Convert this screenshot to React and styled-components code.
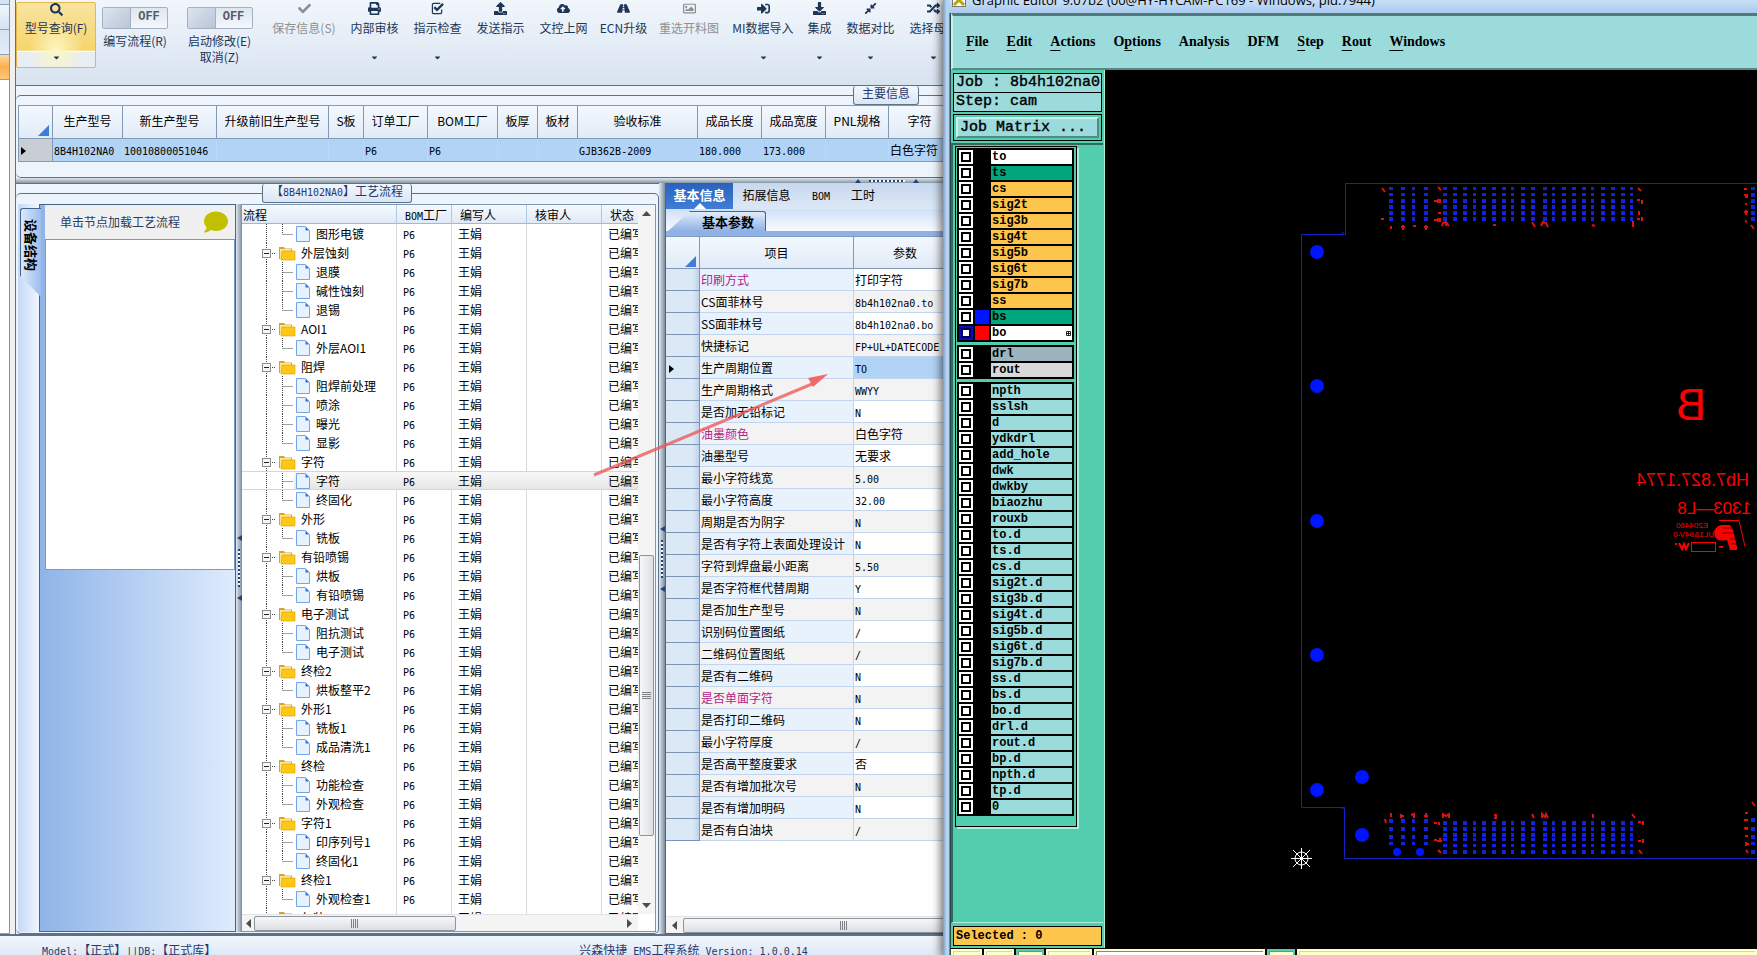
import React from "react";
import styled, { createGlobalStyle, css } from "styled-components";
import {
	FaSearch,
	FaCheck,
	FaPrint,
	FaUpload,
	FaCloudUploadAlt,
	FaRoad,
	FaRegImage,
	FaSignInAlt,
	FaDownload,
	FaCompressAlt,
	FaRandom,
	FaComment,
	FaCaretDown,
} from "react-icons/fa";

const GlobalStyle = createGlobalStyle`
	* {
		box-sizing: border-box;
	}
	body {
		margin: 0;
		overflow: hidden;
		font-family: "Noto Sans CJK SC", "Liberation Sans", sans-serif;
		font-size: 12px;
		line-height: 16px;
		color: #000;
	}
	button, input {
		font: inherit;
		color: inherit;
		margin: 0;
		padding: 0;
		border: 0;
		background: none;
	}
	table {
		border-collapse: separate;
		border-spacing: 0;
		table-layout: fixed;
	}
	th, td {
		padding: 0;
		font-weight: normal;
		text-align: left;
		white-space: nowrap;
		overflow: hidden;
	}
`;

const Desktop = styled.div`
	position: relative;
	height: 100vh;
	overflow: hidden;
`;
const Mono = styled.span`
	font-family: "DejaVu Sans Mono", monospace;
	font-size: 10px;
	line-height: 10px;
`;

/* ---------- EMS window ---------- */

const EmsWindow = styled.div`
	display: flex;
	flex-direction: column;
	height: 100%;
	background: #e8f0fa;
`;
const EmsBody = styled.div`
	display: flex;
	flex: 1;
	min-height: 0;
`;
const Main = styled.main`
	display: flex;
	flex-direction: column;
	flex: 1;
	min-width: 0;
	border-left: 1px solid #5b7288;
`;
const NavEdge = styled.div`
	display: flex;
	flex-direction: column;
	width: 15px;
	padding-right: 5px;
	background: #f0f0f0;
`;
const NavCell = styled.div`
	height: ${({ $h }) => $h}px;
	flex: ${({ $h }) => ($h ? "none" : 1)};
	border-right: 1px solid #7f96b5;
	border-bottom: 1px solid #8ba0bf;
	background: ${({ $bg }) => $bg};
`;

const Toolbar = styled.div`
	display: flex;
	height: 85px;
	background: linear-gradient(#f1f6fc, #d8e3f0);
	color: #1e3555;
	overflow: hidden;
`;
const ToolButton = styled.button`
	display: flex;
	flex-direction: column;
	align-items: center;
	flex: none;
	width: ${({ $w }) => $w}px;
	height: 66px;
	white-space: nowrap;
	color: ${({ disabled }) => (disabled ? "#8f8f8f" : "#1e3555")};
	svg {
		flex: none;
		height: 13px;
		width: 13px;
		margin: 2px 0 5px;
	}
	${({ $active }) =>
		$active &&
		css`
			margin-top: 2px;
			border: 1px solid #e2b94c;
			border-radius: 2px;
			background: radial-gradient(ellipse at 50% 75%, #fdf6c4, transparent 50%),
				linear-gradient(#f9e3a0, #f5d56c 74%, #fff 75%, #fff 76%, #e7edf3 77%);
			svg {
				margin: 0 0 4px;
			}
		`}
`;
const MenuCaret = styled.span`
	display: flex;
	justify-content: center;
	margin-top: 17px;
	svg {
		width: 9px;
		height: 9px;
		margin: 0;
	}
`;
const ToggleGroup = styled.div`
	display: flex;
	flex-direction: column;
	align-items: center;
	flex: none;
	width: ${({ $w }) => $w}px;
	padding-top: 7px;
	white-space: nowrap;
	label {
		display: flex;
		flex-direction: column;
		align-items: center;
		gap: 4px;
	}
`;
const Toggle = styled.span`
	display: flex;
	width: 66px;
	height: 22px;
	border: 1px solid #a3b1c4;
	border-radius: 2px;
	background: linear-gradient(#dfe6ef, #f4f7fb);
	input {
		appearance: none;
		width: 28px;
		height: 20px;
		border-right: 1px solid #a3b1c4;
		background: linear-gradient(135deg, #dde5ee, #b9c6d6);
	}
	b {
		flex: 1;
		font: bold 12px/18px "Liberation Mono", monospace;
		text-align: center;
		color: #555c66;
	}
`;

const GroupArea = styled.section`
	display: flex;
	flex-direction: column;
	height: ${({ $h }) => ($h ? $h + "px" : "auto")};
	width: ${({ $w }) => ($w ? $w + "px" : "auto")};
	flex: none;
	background: #edf4fc;
	border-top: 1px solid #5b7288;
`;
const GroupBox = styled.fieldset`
	display: flex;
	flex-direction: column;
	flex: 1;
	min-width: 0;
	min-height: 0;
	margin: 0;
	padding: 0 2px 1px;
	border: 1px solid #5b7288;
	border-left: 0;
	border-radius: 5px;
`;
const GroupTitle = styled.legend`
	height: 19px;
	margin: 0 auto;
	padding: 0 8px;
	line-height: 14px;
	color: #27386e;
	border: 1px solid #5b7288;
	border-top: 0;
	border-radius: 3px;
	background: linear-gradient(#f2f7fd, #dbe6f4);
`;

const InfoPane = styled.div`
	flex: 1;
	border: 1px solid #7f9bbd;
	background: #fff;
	overflow: hidden;
`;
const InfoTable = styled.table`
	width: 932px;
	th {
		height: 33px;
		padding-bottom: 2px;
		text-align: center;
		border-right: 1px solid #8198b6;
		border-bottom: 1px solid #8198b6;
		background: linear-gradient(#f3f8fd, #e1ebf7);
	}
	td {
		height: 22px;
		padding-left: 1px;
		background: #b1d3f6;
		border-right: 1px solid #bcd8f5;
	}
	td:first-child {
		padding-left: 2px;
		background: #c9ced4;
		border-right-color: #8198b6;
	}
`;
const Corner = styled.svg`
	display: block;
	width: 11px;
	height: 11px;
	margin: 18px 3px 0 auto;
	fill: #3f7ddb;
`;

const HSplitter = styled.div`
	display: flex;
	align-items: center;
	justify-content: center;
	gap: 8px;
	flex: none;
	height: 5px;
	background: linear-gradient(#dfe8f0, #8796a4);
`;
const VSplitter = styled.div`
	display: flex;
	flex-direction: column;
	align-items: center;
	justify-content: center;
	gap: 8px;
	flex: none;
	width: 6px;
	background: linear-gradient(90deg, #dfe8f2, #7e8c99);
`;
const Dots = styled.div`
	width: ${({ $v }) => ($v ? 2 : 36)}px;
	height: ${({ $v }) => ($v ? 38 : 2)}px;
	background: repeating-linear-gradient(
		${({ $v }) => ($v ? "180deg" : "90deg")},
		#24427a 0 2px,
		#f4f8fc 2px 4px
	);
`;
const Tip = styled.div`
	width: 0;
	height: 0;
	border: 3px solid transparent;
	${({ $v }) =>
		$v ? "border-left: 0; border-right: 5px solid #24427a;" : "border-top: 0; border-bottom: 4px solid #24427a;"}
`;

const Lower = styled.div`
	display: flex;
	flex: 1;
	min-height: 0;
`;
const FlowRow = styled.div`
	display: flex;
	flex: 1;
	min-height: 0;
	padding-top: 1px;
`;
const SideTabs = styled.div`
	flex: none;
	width: 21px;
	padding-top: 4px;
	background: linear-gradient(90deg, #c3d9fa, #f1f6fe);
`;
const SideTab = styled.button`
	display: block;
	width: 21px;
	height: 89px;
	margin-left: 2px;
	padding: 10px 0 0;
	text-align: left;
	writing-mode: vertical-rl;
	text-orientation: sideways;
	font-size: 13px;
	line-height: 19px;
	font-weight: bold;
	background: linear-gradient(90deg, #dce9fb, #9dbdec);
	border: 1px solid #46648c;
	border-width: 1px 0 0 1px;
	border-radius: 3px 0 0 0;
	clip-path: polygon(0 0, 100% 0, 100% 100%, 0 76%);
`;
const NodePanel = styled.div`
	flex: none;
	width: 197px;
	padding-left: 5px;
	border: 1px solid #46648c;
	background: linear-gradient(90deg, #8fb4e8, #deebfd);
`;
const NodeHead = styled.div`
	display: flex;
	align-items: center;
	justify-content: space-between;
	height: 34px;
	padding: 0 7px 1px 15px;
	color: #2c3c5e;
	background: #f0f0f0;
	svg {
		width: 24px;
		height: 24px;
		color: #c0c000;
	}
`;
const NodeBox = styled.div`
	height: 331px;
	border: 1px solid #7b9ac5;
	background: #fff;
`;

const TreePane = styled.div`
	display: flex;
	flex-direction: column;
	flex: 1;
	min-width: 0;
	border: 1px solid #7b96b9;
	border-left: 0;
	background: #fff;
`;
const TreeView = styled.div`
	display: flex;
	flex: 1;
	min-height: 0;
`;
const TreeClip = styled.div`
	flex: 1;
	min-width: 0;
	overflow: hidden;
`;
const TreeTable = styled.table`
	width: 410px;
	th {
		height: 19px;
		padding-left: 8px;
		line-height: 17px;
		border-right: 1px solid #b5c7de;
		border-bottom: 1px solid #9fb8d8;
		background: linear-gradient(#f5f9fe, #dfe9f6);
	}
	th:first-child {
		padding-left: 1px;
	}
	td {
		height: 19px;
		padding-left: 6px;
		line-height: 17px;
		border-right: 1px solid #d9d9d9;
	}
	td:first-child {
		padding-left: 19px;
	}
`;
const TreeRow = styled.tr`
	${({ $selected }) =>
		$selected &&
		css`
			td {
				border-top: 1px solid #d5d5d5;
				border-bottom: 1px solid #d5d5d5;
				border-right: 0;
				background: linear-gradient(#f8f8f8, #e6e6e6);
			}
			td:first-child {
				background: linear-gradient(90deg, #fff 52px, transparent 52px), linear-gradient(#f8f8f8, #e6e6e6);
			}
		`}
`;
const NodeCell = styled.div`
	display: flex;
	align-items: center;
	height: 19px;
	margin: -1px 0;
	svg {
		flex: none;
		margin-right: 5px;
	}
`;

const VScroll = styled.div`
	display: flex;
	flex-direction: column;
	align-items: center;
	width: 17px;
	background: #f4f4f4;
`;
const HScroll = styled.div`
	display: flex;
	align-items: center;
	flex: none;
	height: 17px;
	margin-right: ${({ $gap }) => $gap || 0}px;
	background: #f4f4f4;
	border-top: 1px solid #e3e3e3;
`;
const Arrow = styled.button`
	display: grid;
	place-items: center;
	flex: none;
	width: ${({ $side }) => ($side ? 12 : 17)}px;
	height: 17px;
	svg {
		width: 9px;
		height: 9px;
		fill: #4c4c4c;
	}
`;
const Track = styled.div`
	flex: ${({ $n }) => $n};
`;
const Thumb = styled.div`
	display: grid;
	place-items: center;
	flex: ${({ $n }) => $n};
	width: 15px;
	height: 15px;
	border: 1px solid #8e949b;
	border-radius: 2px;
	background: linear-gradient(${({ $v }) => ($v ? "90deg" : "180deg")}, #f6f7f8, #dcdfe3);
	&::before {
		content: "";
		width: ${({ $v }) => ($v ? 9 : 7)}px;
		height: ${({ $v }) => ($v ? 7 : 9)}px;
		background: repeating-linear-gradient(
			${({ $v }) => ($v ? "180deg" : "90deg")},
			#7c8288 0 1px,
			transparent 1px 2px
		);
	}
`;

const ParamPane = styled.section`
	display: flex;
	flex-direction: column;
	flex: 1;
	min-width: 0;
	border: 1px solid #3f67a5;
	border-width: 0 0 1px 1px;
	background: #8fb1e6;
`;
const MainTabs = styled.div`
	display: flex;
	flex: none;
	height: 26px;
	background: linear-gradient(#c7d8ee, #dde8f6);
`;
const MainTab = styled.button`
	width: ${({ $w }) => $w}px;
	padding-bottom: 2px;
	${({ $active }) =>
		$active &&
		css`
			font-size: 13px;
			font-weight: bold;
			color: #fff;
			background: linear-gradient(#2a62bd, #3f7ed8);
			&::after {
				content: "";
				display: block;
				width: 0;
				margin: 0 auto -5px;
				border: 6px solid transparent;
				border-top: 0;
				border-bottom-color: #fff;
			}
		`}
`;
const SubTabs = styled.div`
	flex: none;
	height: 27px;
	padding: 2px 0 0 2px;
	border-bottom: 5px solid #8fb1e6;
	background: linear-gradient(#d0e0f8, #f8fbff);
`;
const SubTab = styled.button`
	width: 98px;
	height: 20px;
	padding-left: 23px;
	font-size: 13px;
	font-weight: bold;
	background: linear-gradient(#e2edfb, #8fb1e6);
	border: 1px solid #46648c;
	border-width: 1px 1px 0 0;
	border-radius: 0 3px 0 0;
	clip-path: polygon(22px 0, 100% 0, 100% 100%, 0 100%);
`;
const ParamView = styled.div`
	flex: 1;
	min-height: 0;
	border-top: 1px solid #7f9bbd;
	background: #fff;
	overflow: hidden;
`;
const ParamTable = styled.table`
	width: 291px;
	thead th {
		height: 32px;
		text-align: center;
		border-right: 1px solid #8198b6;
		border-bottom: 1px solid #8198b6;
		background: linear-gradient(#f3f8fd, #e1ebf7);
	}
	tbody th {
		height: 22px;
		border-right: 1px solid #7d93b3;
		border-bottom: 1px solid #7d93b3;
		background: linear-gradient(90deg, #dbe8f5 80%, #c0d2ea);
	}
	td {
		height: 22px;
		padding-left: 1px;
		line-height: 18px;
		border-right: 1px solid #c3d4ee;
		border-bottom: 1px solid #c3d4ee;
	}
`;
const ParamRow = styled.tr`
	td {
		background: ${({ $odd }) => ($odd ? "#f3f3f3" : "#fff")};
	}
	td:nth-child(2) {
		color: ${({ $key }) => ($key ? "#b3218c" : "#000")};
		background: ${({ $odd }) => ($odd ? "#f3f3f3" : "#e8f2fd")};
	}
	td:nth-child(3) {
		${({ $current }) => $current && "background: #b1d3f6;"}
	}
`;

const StatusBar = styled.footer`
	display: flex;
	flex: none;
	gap: 363px;
	height: 21px;
	padding: 6px 0 0 42px;
	border-top: 2px solid #5d7189;
	background: linear-gradient(#f1f6fc, #dfe9f5);
	color: #27386e;
	white-space: pre;
	overflow: hidden;
`;
const Pointer = styled.svg`
	position: absolute;
	left: 590px;
	top: 370px;
	width: 242px;
	height: 110px;
	pointer-events: none;
`;

/* ---------- graphic editor window ---------- */

const CamWindow = styled.div`
	position: absolute;
	top: 0;
	right: 0;
	bottom: 0;
	left: 943px;
	display: flex;
	flex-direction: column;
	padding-left: 8px;
	background: linear-gradient(90deg, #7e9cbc, #bcd9f8 4px, #a9cdf4 6px, #2d4a48 7px);
	box-shadow: 0 0 9px 2px rgba(0, 0, 0, 0.6);
`;
const TitleBar = styled.header`
	display: flex;
	align-items: flex-end;
	gap: 6px;
	flex: none;
	height: 13px;
	margin-left: -2px;
	padding: 0 0 6px;
	background: linear-gradient(#c9def4, #a8caf0);
	font-family: "Open Sans", sans-serif;
	font-size: 13px;
	line-height: 14px;
	white-space: nowrap;
	overflow: hidden;
	svg {
		flex: none;
		margin-left: 3px;
	}
`;
const MenuBar = styled.nav`
	display: flex;
	align-items: center;
	gap: 18px;
	flex: none;
	height: 57px;
	padding: 0 13px;
	border: solid;
	border-width: 3px 0 2px 2px;
	border-color: #527878 #c8f2f0 #5a8786 #c8f2f0;
	background: #9cdbdb;
	button {
		font: bold 14px/20px "Liberation Serif", serif;
	}
	u {
		text-underline-offset: 4px;
	}
`;
const CamBody = styled.div`
	display: flex;
	flex: 1;
	min-height: 0;
`;
const LayerSide = styled.aside`
	display: flex;
	flex-direction: column;
	flex: none;
	width: 154px;
	padding: 3px 2px 2px;
	background: #52cdae;
	border-right: 1px solid #a8efdc;
	font-family: "Liberation Mono", monospace;
	font-weight: bold;
`;
const JobLine = styled.div`
	height: 20px;
	margin-bottom: -1px;
	padding-left: 2px;
	font-size: 15px;
	line-height: 18px;
	font-weight: normal;
	-webkit-text-stroke: 0.4px #000;
	white-space: pre;
	border: 1px solid #000;
	background: #9cdbdb;
`;
const MatrixFrame = styled.div`
	height: 27px;
	margin: 3px 0;
	padding: 2px;
	border: 1px solid #000;
`;
const MatrixButton = styled.button`
	display: block;
	width: 100%;
	height: 21px;
	padding-left: 2px;
	font-size: 15px;
	font-weight: normal;
	line-height: 17px;
	-webkit-text-stroke: 0.4px #000;
	text-align: left;
	background: #9cdbdb;
	border: 2px solid;
	border-color: #c8f2f0 #4f8b88 #4f8b88 #c8f2f0;
`;
const LayerWell = styled.div`
	flex: 1;
	min-height: 0;
	margin: -1px -1px 0 -2px;
	padding: 1px 0 0 2px;
	border-left: 2px solid #2d6a5c;
	border-top: 2px solid #2d6a5c;
	border-bottom: 1px solid #a8efdc;
`;
const LayerFrame = styled.div`
	display: flex;
	flex-direction: column;
	gap: 3px;
	width: 122px;
	padding: 1px 2px 10px 1px;
	border: 1px solid #000;
	box-shadow: 2px 2px 0 #a8efdc;
`;
const LayerGroup = styled.div`
	display: flex;
	flex-direction: column;
	gap: 2px;
	padding: 2px;
	background: #000;
`;
const LayerRow = styled.label`
	display: grid;
	grid-template-columns: 14px 14px 1fr;
	gap: 2px;
	height: 14px;
	line-height: 14px;
	input {
		appearance: none;
		width: 10px;
		height: 10px;
		margin: 2px;
		border: 2px solid ${({ $on }) => ($on ? "#000058" : "#000")};
		background: #fff;
		outline: 2px solid ${({ $on }) => ($on ? "#0b0bb4" : "#fff")};
	}
`;
const Swatch = styled.i`
	background: ${({ $color }) => $color || "#000"};
`;
const LayerName = styled.span`
	display: flex;
	align-items: center;
	justify-content: space-between;
	padding: 0 1px;
	background: ${({ $bg }) => $bg};
`;
const Selected = styled.div`
	flex: none;
	height: 20px;
	margin-top: 3px;
	padding-left: 2px;
	line-height: 18px;
	white-space: pre;
	border: 1px solid #000;
	background: #fec54d;
`;
const Board = styled.svg`
	flex: 1;
	min-width: 0;
	height: 100%;
	background: #000;
`;
const CamFoot = styled.div`
	display: flex;
	gap: 2px;
	flex: none;
	height: 7px;
	padding-top: 1px;
	background: #000;
`;
const FootCell = styled.div`
	width: ${({ $w }) => $w}px;
	flex: ${({ $w }) => ($w ? "none" : 1)};
	background: ${({ $bg }) => $bg || "#ffffcc"};
	border: 2px solid ${({ $edge }) => $edge || "#ffffcc"};
	border-bottom: 0;
	box-shadow: inset 1px 1px 0 ${({ $edge }) => ($edge ? "#8a8a70" : "#d8d8a8")};
`;

const infoCols = [
	["", 34],
	["生产型号", 70, <Mono>8B4H102NA0</Mono>],
	["新生产型号", 94, <Mono>10010800051046</Mono>],
	["升级前旧生产型号", 112],
	["S板", 35],
	["订单工厂", 64, <Mono>P6</Mono>],
	["BOM工厂", 70, <Mono>P6</Mono>],
	["板厚", 40],
	["板材", 40],
	["验收标准", 120, <Mono>GJB362B-2009</Mono>],
	["成品长度", 64, <Mono>180.000</Mono>],
	["成品宽度", 64, <Mono>173.000</Mono>],
	["PNL规格", 63],
	["字符", 62, "白色字符"],
];

// leading ">" marks a child node
const nodes = [
	">图形电镀", "外层蚀刻", ">退膜", ">碱性蚀刻", ">退锡", "AOI1", ">外层AOI1",
	"阻焊", ">阻焊前处理", ">喷涂", ">曝光", ">显影", "字符", ">字符", ">终固化",
	"外形", ">铣板", "有铅喷锡", ">烘板", ">有铅喷锡", "电子测试", ">阻抗测试",
	">电子测试", "终检2", ">烘板整平2", "外形1", ">铣板1", ">成品清洗1", "终检",
	">功能检查", ">外观检查", "字符1", ">印序列号1", ">终固化1", "终检1",
	">外观检查1", "包装",
];

const params = [
	["印刷方式", "打印字符", true],
	["CS面菲林号", "8b4h102na0.to"],
	["SS面菲林号", "8b4h102na0.bo"],
	["快捷标记", "FP+UL+DATECODE"],
	["生产周期位置", "TO"],
	["生产周期格式", "WWYY"],
	["是否加无铅标记", "N"],
	["油墨颜色", "白色字符", true],
	["油墨型号", "无要求"],
	["最小字符线宽", "5.00"],
	["最小字符高度", "32.00"],
	["周期是否为阴字", "N"],
	["是否有字符上表面处理设计", "N"],
	["字符到焊盘最小距离", "5.50"],
	["是否字符框代替周期", "Y"],
	["是否加生产型号", "N"],
	["识别码位置图纸", "/"],
	["二维码位置图纸", "/"],
	["是否有二维码", "N"],
	["是否单面字符", "N", true],
	["是否打印二维码", "N"],
	["最小字符厚度", "/"],
	["是否高平整度要求", "否"],
	["是否有增加批次号", "N"],
	["是否有增加明码", "N"],
	["是否有白油块", "/"],
];

const orange = "#fec54d";
const teal = "#9cdbdb";
const layerGroups = [
	[
		["to", "#fff"],
		["ts", "#00a57d"],
		["cs", orange],
		["sig2t", orange],
		["sig3b", orange],
		["sig4t", orange],
		["sig5b", orange],
		["sig6t", orange],
		["sig7b", orange],
		["ss", orange],
		["bs", "#00a57d", "#0014ff"],
		["bo", "#fff", "#ff0000"],
	],
	[
		["drl", "#9bb4be"],
		["rout", "#d9d9d9"],
	],
	[
		"npth", "sslsh", "d", "ydkdrl", "add_hole", "dwk", "dwkby", "biaozhu", "rouxb",
		"to.d", "ts.d", "cs.d", "sig2t.d", "sig3b.d", "sig4t.d", "sig5b.d", "sig6t.d",
		"sig7b.d", "ss.d", "bs.d", "bo.d", "drl.d", "rout.d", "bp.d", "npth.d", "tp.d", "0",
	].map((name) => [name, teal]),
];

const menus = [
	["F", "ile"],
	["E", "dit"],
	["A", "ctions"],
	["", "Options", "p"],
	["", "Analysis"],
	["", "DFM"],
	["S", "tep"],
	["R", "out"],
	["W", "indows"],
];

const isLatin = (text) => /^[\x20-\x7e]+$/.test(text);
const Value = ({ children }) => (isLatin(children) ? <Mono>{children}</Mono> : children);

const CheckEdit = () => (
	<svg viewBox="0 0 14 14" fill="none" stroke="currentColor">
		<path d="M10 1.500H3A1.500 1.500 0 0 0 1.500 3v8A1.500 1.500 0 0 0 3 12.500h7A1.500 1.500 0 0 0 11.500 11V8" strokeWidth="1.300" />
		<path d="M3.500 5.500l3 3L13 2" strokeWidth="2.400" />
	</svg>
);

const Caret = () => (
	<MenuCaret>
		<FaCaretDown />
	</MenuCaret>
);

const tools = [
	["保存信息(S)", 78, FaCheck, false, true],
	["内部审核", 63, FaPrint, true],
	["指示检查", 63, CheckEdit, true],
	["发送指示", 63, FaUpload],
	["文控上网", 63, FaCloudUploadAlt],
	["ECN升级", 57, FaRoad],
	["重选开料图", 74, FaRegImage, false, true],
	["MI数据导入", 74, FaSignInAlt, true],
	["集成", 39, FaDownload, true],
	["数据对比", 63, FaCompressAlt, true],
	["选择母板", 63, FaRandom, true],
];

const CornerMark = () => (
	<Corner viewBox="0 0 11 11">
		<path d="M11 0v11H0z" />
	</Corner>
);

const NodeIcon = ({ child, last, end }) => (
	<svg width={child ? 50 : 35} height="19" viewBox={`0 0 ${child ? 50 : 35} 19`}>
		<path
			d={`M5.500 0V${end ? 10 : 19}${child ? `M21.500 0V${last ? 10 : 19}M21.500 10.500H32` : "M9 10.500h6"}`}
			stroke="#444"
			strokeDasharray="1 1"
			fill="none"
		/>
		{child ? (
			<g>
				<path d="M35.500 2.500h9l4 4v11h-13z" fill="#e6f2ff" stroke="#74a4e6" />
				<path d="M44.500 3l3.500 3.500h-3.500z" fill="#2f6fd6" />
			</g>
		) : (
			<g>
				<rect x="1.500" y="6.500" width="8" height="8" fill="#f7f7f7" stroke="#8c8c8c" />
				<path d="M3 10.500h5" stroke="#222" />
				<path d="M18 4h5l1 1.500h7V16H18z" fill="#d9a328" />
				<path d="M19 6h11v10H19z" fill="#f7e7a0" />
				<path d="M21 8h13v9H20z" fill="#ffc814" stroke="#e09c00" strokeWidth=".6" />
			</g>
		)}
	</svg>
);

const ArrowBtn = ({ dir, side }) => {
	const shapes = { up: "M0 7l4.500-5L9 7z", down: "M0 2l4.500 5L9 2z", left: "M7 0L2 4.500 7 9z", right: "M2 0l5 4.500L2 9z" };
	return (
		<Arrow $side={side} aria-label={dir}>
			<svg viewBox="0 0 9 9">
				<path d={shapes[dir]} />
			</svg>
		</Arrow>
	);
};

const EmsToolbar = () => (
	<Toolbar>
		<ToolButton $w={80} $active>
			<FaSearch />
			型号查询(F)
			<Caret />
		</ToolButton>
		<ToggleGroup $w={78}>
			<label>
				<Toggle>
					<input type="checkbox" />
					<b>OFF</b>
				</Toggle>
				编写流程(R)
			</label>
		</ToggleGroup>
		<ToggleGroup $w={91}>
			<label>
				<Toggle>
					<input type="checkbox" />
					<b>OFF</b>
				</Toggle>
				启动修改(E)
			</label>
			<button>取消(Z)</button>
		</ToggleGroup>
		{tools.map(([label, w, Icon, menu, disabled]) => (
			<ToolButton key={label} $w={w} disabled={disabled}>
				<Icon />
				{label}
				{menu && <Caret />}
			</ToolButton>
		))}
	</Toolbar>
);

const RowMark = () => (
	<svg width="5" height="8" viewBox="0 0 5 8">
		<path d="M0 0l5 4-5 4z" />
	</svg>
);

const MainInfo = () => (
	<GroupArea $h={93}>
		<GroupBox>
			<GroupTitle>主要信息</GroupTitle>
			<InfoPane>
				<InfoTable>
					<colgroup>
						{infoCols.map(([name, w]) => (
							<col key={name} width={w} />
						))}
					</colgroup>
					<thead>
						<tr>
							{infoCols.map(([name]) => (
								<th key={name}>{name || <CornerMark />}</th>
							))}
						</tr>
					</thead>
					<tbody>
						<tr>
							{infoCols.map(([name, , value]) => (
								<td key={name}>{name ? value : <RowMark />}</td>
							))}
						</tr>
					</tbody>
				</InfoTable>
			</InfoPane>
		</GroupBox>
	</GroupArea>
);

const FlowTree = () => (
	<TreePane>
		<TreeView>
			<TreeClip>
				<TreeTable>
					<colgroup>
						<col width="155" />
						<col width="55" />
						<col width="75" />
						<col width="75" />
						<col width="50" />
					</colgroup>
					<thead>
						<tr>
							<th>流程</th>
							<th>
								<Mono>BOM</Mono>工厂
							</th>
							<th>编写人</th>
							<th>核审人</th>
							<th>状态</th>
						</tr>
					</thead>
					<tbody>
						{nodes.map((node, i) => {
							const child = node[0] === ">";
							const next = nodes[i + 1];
							return (
								<TreeRow key={i} $selected={i === 13}>
									<td>
										<NodeCell>
											<NodeIcon child={child} last={!next || next[0] !== ">"} />
											{child ? node.slice(1) : node}
										</NodeCell>
									</td>
									<td>
										<Mono>P6</Mono>
									</td>
									<td>王娟</td>
									<td />
									<td>已编写</td>
								</TreeRow>
							);
						})}
					</tbody>
				</TreeTable>
			</TreeClip>
			<VScroll>
				<ArrowBtn dir="up" />
				<Track $n={333} />
				<Thumb $n={280} $v />
				<Track $n={61} />
				<ArrowBtn dir="down" />
			</VScroll>
		</TreeView>
		<HScroll $gap={17}>
			<ArrowBtn dir="left" side />
			<Thumb $n={199} />
			<Track $n={165} />
			<ArrowBtn dir="right" />
		</HScroll>
	</TreePane>
);

const Params = () => (
	<ParamPane>
		<MainTabs>
			<MainTab $w={67} $active>
				基本信息
			</MainTab>
			<MainTab $w={67}>拓展信息</MainTab>
			<MainTab $w={42}>
				<Mono>BOM</Mono>
			</MainTab>
			<MainTab $w={42}>工时</MainTab>
		</MainTabs>
		<SubTabs>
			<SubTab>基本参数</SubTab>
		</SubTabs>
		<ParamView>
			<ParamTable>
				<colgroup>
					<col width="34" />
					<col width="154" />
					<col width="103" />
				</colgroup>
				<thead>
					<tr>
						<th>
							<CornerMark />
						</th>
						<th>项目</th>
						<th>参数</th>
					</tr>
				</thead>
				<tbody>
					{params.map(([name, value, key], i) => (
						<ParamRow key={name} $odd={i % 2 === 1} $key={key} $current={i === 4}>
							<th>{i === 4 && <>&nbsp;<RowMark /></>}</th>
							<td>{name}</td>
							<td>
								<Value>{value}</Value>
							</td>
						</ParamRow>
					))}
				</tbody>
			</ParamTable>
		</ParamView>
		<HScroll>
			<ArrowBtn dir="left" />
			<Thumb $n="0 0 320px" />
		</HScroll>
	</ParamPane>
);

const Ems = () => (
	<EmsWindow>
		<EmsBody>
			<NavEdge>
				<NavCell $h={5} $bg="#d5e3f3" />
				<NavCell $h={25} $bg="linear-gradient(#f0f6fc, #d5e2f2)" />
				<NavCell $h={25} $bg="linear-gradient(#d5e2f2, #e4edf8)" />
				<NavCell $h={25} $bg="linear-gradient(#fdd9a0, #fbb04e 50%, #fdc877)" />
				<NavCell $bg="#fff" />
			</NavEdge>
			<Main>
				<EmsToolbar />
				<MainInfo />
				<HSplitter>
					<Tip />
					<Dots />
					<Tip />
				</HSplitter>
				<Lower>
					<GroupArea $w={643}>
						<GroupBox>
							<GroupTitle>
								【<Mono>8B4H102NA0</Mono>】工艺流程
							</GroupTitle>
							<FlowRow>
								<SideTabs>
									<SideTab>设备结构</SideTab>
								</SideTabs>
								<NodePanel>
									<NodeHead>
										单击节点加载工艺流程
										<FaComment />
									</NodeHead>
									<NodeBox />
								</NodePanel>
								<VSplitter>
									<Tip $v />
									<Dots $v />
									<Tip $v />
								</VSplitter>
								<FlowTree />
							</FlowRow>
						</GroupBox>
					</GroupArea>
					<VSplitter>
						<Tip $v />
						<Dots $v />
						<Tip $v />
					</VSplitter>
					<Params />
				</Lower>
			</Main>
		</EmsBody>
		<StatusBar>
			<span>
				<Mono>Model:</Mono>【正式】<Mono>||DB:</Mono>【正式库】
			</span>
			<span>
				兴森快捷<Mono> EMS</Mono>工程系统<Mono> Version: 1.0.0.14</Mono>
			</span>
		</StatusBar>
	</EmsWindow>
);

const padCols = [
	1445, 1455, 1465, 1475, 1484, 1494, 1504, 1513, 1523, 1533, 1545, 1554, 1564, 1574, 1584, 1593,
	1603, 1613, 1623, 1632,
];
const edgeCols = [1391, 1403, 1414, 1426];
const thinCols = [1414, 1475, 1513, 1554, 1593, 1632];
const topRows = [189, 195, 201, 207, 213, 219];
const lowRows = [823, 829, 835, 840, 846, 852];

const Pads = ({ cols, rows, flat }) =>
	cols.map((x) =>
		rows.map((y, i) => {
			const w = thinCols.includes(x) ? 3 : 4;
			const h = flat.includes(i) ? 3 : 4;
			return <rect key={x + "-" + y} x={x - 2} y={y - 2} width={w} height={h} />;
		})
	);

// silkscreen pin marks next to the connectors
const marks = [
	"M1382 188l3 4M1381 219h3M1391 226v3M1401 227h4M1403 225v5M1413 226h3M1424 227h4M1426 225v5",
	"M1438 187l3 3M1434 201h3M1438 199v4M1440 199v4M1438 213h3M1434 220h3M1438 218v4M1440 218v4",
	"M1442 226l1-3 3-1 3 4M1446 222v4M1493 225h3M1532 222l3 5M1541 226l2-4 3 1 2 4M1592 225l3 1M1633 221v6",
	"M1638 188l3 3M1637 200h3M1642 200v4M1639 211v4M1637 219h3M1642 217v4",
	"M1744 189h3M1744 195h4M1745 197h3M1745 204h2M1744 212h4M1746 210v5M1745 221l2 1M1751 225l3 4",
	"M1391 813v4M1401 814v4M1402 816h2M1411 815l3-1v4M1424 816h4M1426 813v5M1385 819l1 4",
	"M1443 818v-4l3 2 3-2v4M1494 815h2v3h-2M1532 814l2 4M1542 818v-4l3 3 1-3 2 4M1593 814v4M1632 814l3 4",
	"M1434 823h3M1439 822v3M1434 840h3M1437 841h5M1440 838v4M1438 850l3 3M1638 822h3M1643 821v4M1638 841h3M1643 839v4M1639 850l3 4",
	"M1752 802l3 4M1745 813h3M1744 820h4M1744 828h4M1745 829h3M1745 836h3M1745 844h4M1746 842v4M1746 850l2 3",
];

const BoardView = () => (
	<Board>
		<g transform="translate(-1105 -70)">
			<path
				d="M1800 183.500H1345.500V234.500H1301.500V807.500H1344.500V858.500H1800M1341 234l3-2M1341 808h4"
				fill="none"
				stroke="#1420c8"
			/>
			<g fill="#0014ff">
				{[252, 386, 521, 655, 790].map((y) => (
					<circle key={y} cx="1317" cy={y} r="7" />
				))}
				<circle cx="1362" cy="777" r="7" />
				<circle cx="1362" cy="835" r="7" />
				<circle cx="1397" cy="852" r="4" />
				<circle cx="1420" cy="852" r="4" />
			</g>
			<g fill="#1222e0">
				<Pads cols={edgeCols} rows={topRows} flat={[0, 1]} />
				<Pads cols={padCols} rows={topRows} flat={[0, 1]} />
				<Pads cols={edgeCols} rows={[821, 829, 837, 844]} flat={[3]} />
				<Pads cols={padCols} rows={lowRows} flat={[3, 4]} />
				<Pads cols={[1753]} rows={topRows} flat={[0]} />
				<Pads cols={[1753]} rows={[820, 829, 837, 844, 852]} flat={[3]} />
			</g>
			<path d={marks.join("")} fill="none" stroke="#e01010" strokeWidth="2" />
			<g fill="#ff0000" fontFamily="Liberation Sans, sans-serif">
				<text transform="translate(1706 420) scale(-1 1)" fontSize="45">
					B
				</text>
				<text transform="translate(1749 486) scale(-1 1)" fontSize="18">
					Hb7.827.1774
				</text>
				<text transform="translate(1751 514) scale(-1 1)" fontSize="17">
					1303—L8
				</text>
				<text transform="translate(1708 528) scale(-1 1)" fontSize="8">
					E204460
				</text>
				<text transform="translate(1714 537) scale(-1 1)" fontSize="8">
					UL1&amp;94V-0
				</text>
				<path d="M1714 531q3-6 8-6h8l3 5 4 17v3h-7l-3-10q-9 2-12-3z" />
				<path d="M1719 520.500h20l6 26" fill="none" stroke="#ff0000" />
				<path d="M1723 528h10M1722 533h13M1730 539h6M1731 544h6" stroke="#000" strokeWidth=".5" />
				<rect x="1691.500" y="542.500" width="24" height="9" fill="none" stroke="#ff0000" />
				<path d="M1675 544h2M1679 543l3 6 2-5 2 5 3-6M1719 547h4" stroke="#ff0000" strokeWidth="2" fill="none" />
			</g>
			<g stroke="#fff" fill="none">
				<circle cx="1301.500" cy="858.500" r="6.500" />
				<path d="M1291 858.500h21M1301.500 848v21M1293 850l17 17M1310 850l-17 17" />
			</g>
		</g>
	</Board>
);

const GraphicEditor = () => (
	<CamWindow>
		<TitleBar>
			<svg width="14" height="14" viewBox="0 0 14 14">
				<rect x=".5" y=".5" width="13" height="13" fill="#fff" stroke="#777" />
				<path d="M2 2l10 10M12 2L2 12" stroke="#b5a800" strokeWidth="3" />
			</svg>
			<span>Graphic Editor 9.07b2 (00@HY-HYCAM-PC169 - Windows, pid:7944)</span>
		</TitleBar>
		<MenuBar>
			{menus.map(([hot, rest, mid]) => (
				<button key={rest}>
					{hot && <u>{hot}</u>}
					{mid ? (
						<>
							O<u>p</u>tions
						</>
					) : (
						rest
					)}
				</button>
			))}
		</MenuBar>
		<CamBody>
			<LayerSide>
				<JobLine>Job : 8b4h102na0</JobLine>
				<JobLine>Step: cam</JobLine>
				<MatrixFrame>
					<MatrixButton>Job Matrix ...</MatrixButton>
				</MatrixFrame>
				<LayerWell>
					<LayerFrame>
						{layerGroups.map((group, i) => (
							<LayerGroup key={i}>
								{group.map(([name, bg, color]) => (
									<LayerRow key={name} $on={name === "bo"}>
										<input type="checkbox" />
										<Swatch $color={color} />
										<LayerName $bg={bg}>
											{name}
											{name === "bo" && (
												<svg width="5" height="5" viewBox="0 0 5 5" fill="none" stroke="#000">
													<path d="M.5.500h4v4h-4zM2.500 0v5M0 2.500h5" strokeWidth=".8" />
												</svg>
											)}
										</LayerName>
									</LayerRow>
								))}
							</LayerGroup>
						))}
					</LayerFrame>
				</LayerWell>
				<Selected>Selected : 0</Selected>
			</LayerSide>
			<BoardView />
		</CamBody>
		<CamFoot>
			<FootCell $w={31} />
			<FootCell $w={30} />
			<FootCell $w={28} $edge="#52cdae" />
			<FootCell $w={46} />
			<FootCell $w={171} $edge="#ffffcc" $bg="#fff" />
			<FootCell $w={28} $edge="#52cdae" />
			<FootCell />
		</CamFoot>
	</CamWindow>
);

const App = () => (
	<>
		<GlobalStyle />
		<Desktop>
			<Ems />
			<Pointer viewBox="0 0 242 110">
				<path d="M4 105L222 14" stroke="#ee5a5a" strokeOpacity=".8" strokeWidth="3" />
				<path d="M218 8l20-4-15 13z" fill="#f06a6a" />
			</Pointer>
			<GraphicEditor />
		</Desktop>
	</>
);

export default App;
